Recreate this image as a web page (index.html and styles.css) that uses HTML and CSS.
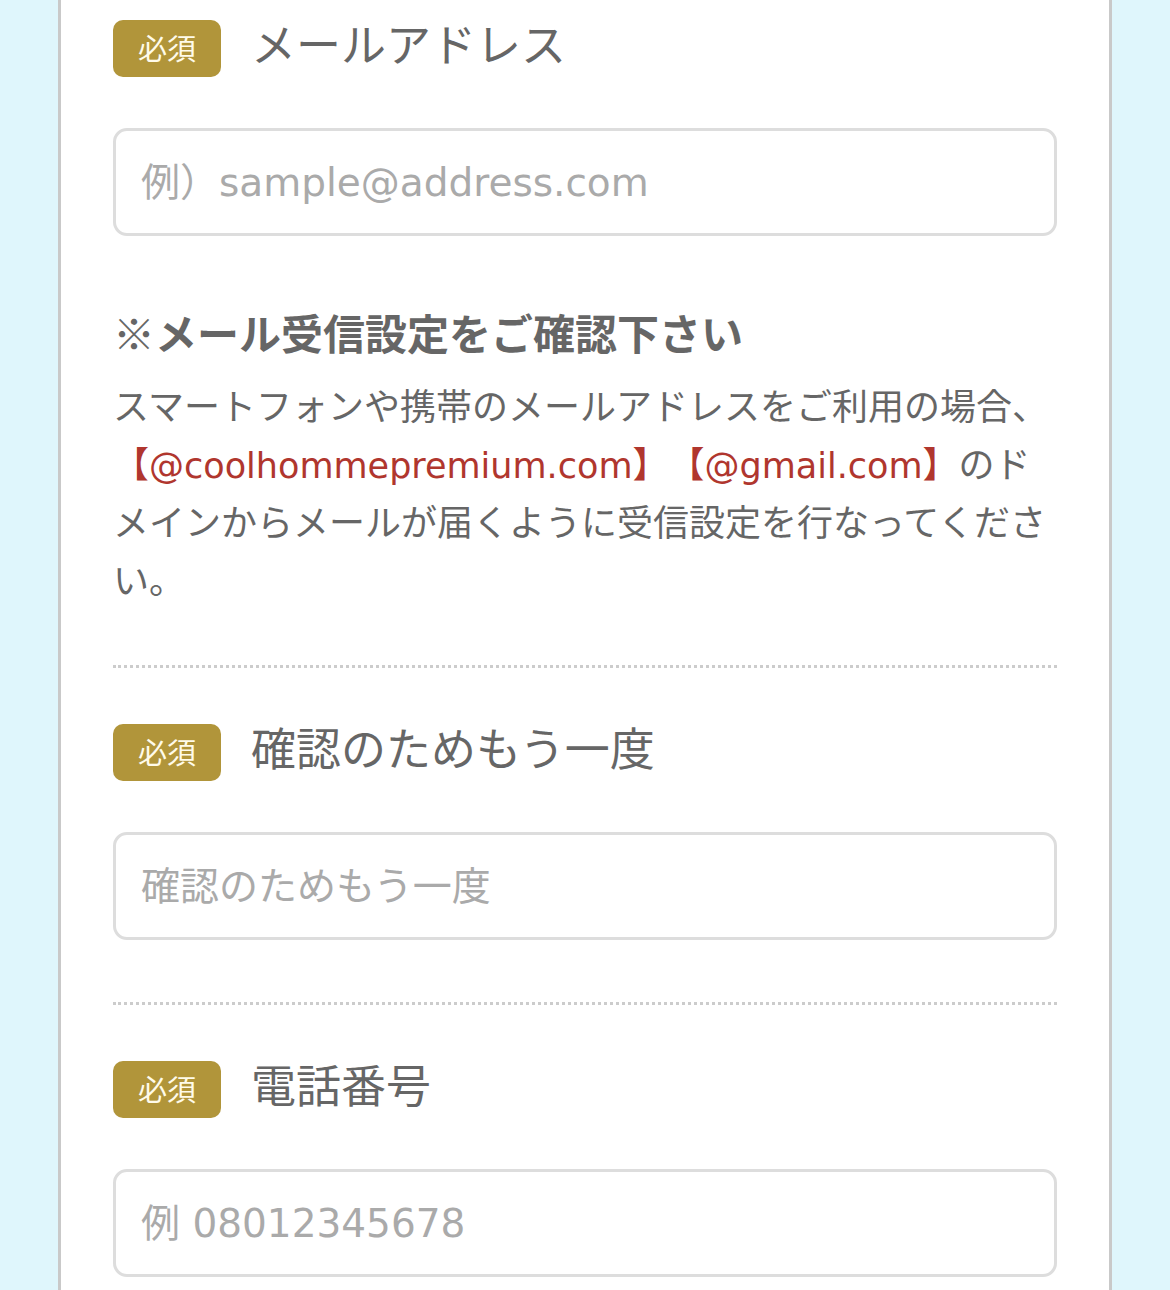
FILE: index.html
```html
<!DOCTYPE html>
<html lang="ja">
<head>
    <meta charset="UTF-8">
    <meta name="viewport" content="width=device-width, initial-scale=1.0">
    <title>お問い合わせ</title>
    <link rel="stylesheet" href="styles.css">
</head>
<body>
    <div class="form-card">
        <div class="field field-first">
            <div class="field-head">
                <span class="badge">必須</span>
                <label class="field-label" for="mail">メールアドレス</label>
            </div>
            <input class="field-input" type="email" id="mail" placeholder="例）sample@address.com">
            <div class="field-note">
                <h3>※メール受信設定をご確認下さい</h3>
                <p>スマートフォンや携帯のメールアドレスをご利用の場合、<span class="domain">【<span class="latin">@coolhommepremium.com</span>】【<span class="latin">@gmail.com</span>】</span>のドメインからメールが届くように受信設定を行なってください。</p>
            </div>
        </div>

        <div class="field">
            <div class="field-head">
                <span class="badge">必須</span>
                <label class="field-label" for="mail2">確認のためもう一度</label>
            </div>
            <input class="field-input" type="email" id="mail2" placeholder="確認のためもう一度">
        </div>

        <div class="field field-last">
            <div class="field-head">
                <span class="badge">必須</span>
                <label class="field-label" for="tel">電話番号</label>
            </div>
            <input class="field-input" type="tel" id="tel" placeholder="例 08012345678">
        </div>
    </div>
</body>
</html>
```

FILE: styles.css
```css
body {
    font-family: "Noto Sans CJK JP", "Noto Sans", sans-serif;
    background-color: #dff6fc;
    margin: 0;
    padding: 0;
    color: #666;
    text-spacing-trim: space-all;
}

.form-card {
    margin: 0 58px;
    padding: 0 52px 80px;
    background-color: #fff;
    border-left: 3px solid #c9c9c9;
    border-right: 3px solid #c9c9c9;
}

.field {
    padding-top: 56px;
    border-bottom: 3px dotted #ccc;
}

.field-first {
    padding-top: 20px;
}

.field-last {
    border-bottom: none;
}

.field-head {
    display: flex;
    align-items: flex-start;
    margin-bottom: 51px;
}

.badge {
    display: flex;
    align-items: center;
    justify-content: center;
    box-sizing: border-box;
    width: 108px;
    height: 57px;
    padding-bottom: 4px;
    border-radius: 10px;
    background-color: #b1953a;
    color: #fffbea;
    font-size: 29px;
    flex-shrink: 0;
}

.field-label {
    margin-left: 30px;
    font-size: 45px;
    line-height: 1;
    color: #666;
}

.field-input {
    display: block;
    box-sizing: border-box;
    width: 100%;
    height: 108px;
    margin: 0 0 62px;
    padding: 0 25px;
    border: 3px solid #ddd;
    border-radius: 14px;
    background-color: #fff;
    font-family: "DejaVu Sans", "Noto Sans CJK JP", sans-serif;
    font-size: 39px;
    color: #666;
    outline: none;
}

.field-input::placeholder {
    color: #aaa;
}

.field-note {
    margin: 67px 0 58px;
}

.field-note h3 {
    margin: 0 0 14px;
    font-size: 42px;
    line-height: 58px;
    font-weight: bold;
    color: #666;
}

.field-note p {
    margin: 0;
    font-size: 36px;
    line-height: 58px;
}

.domain {
    color: #b0362e;
}

.latin {
    font-family: "DejaVu Sans", "Noto Sans CJK JP", sans-serif;
    font-size: 35px;
    line-height: 1;
}
```
